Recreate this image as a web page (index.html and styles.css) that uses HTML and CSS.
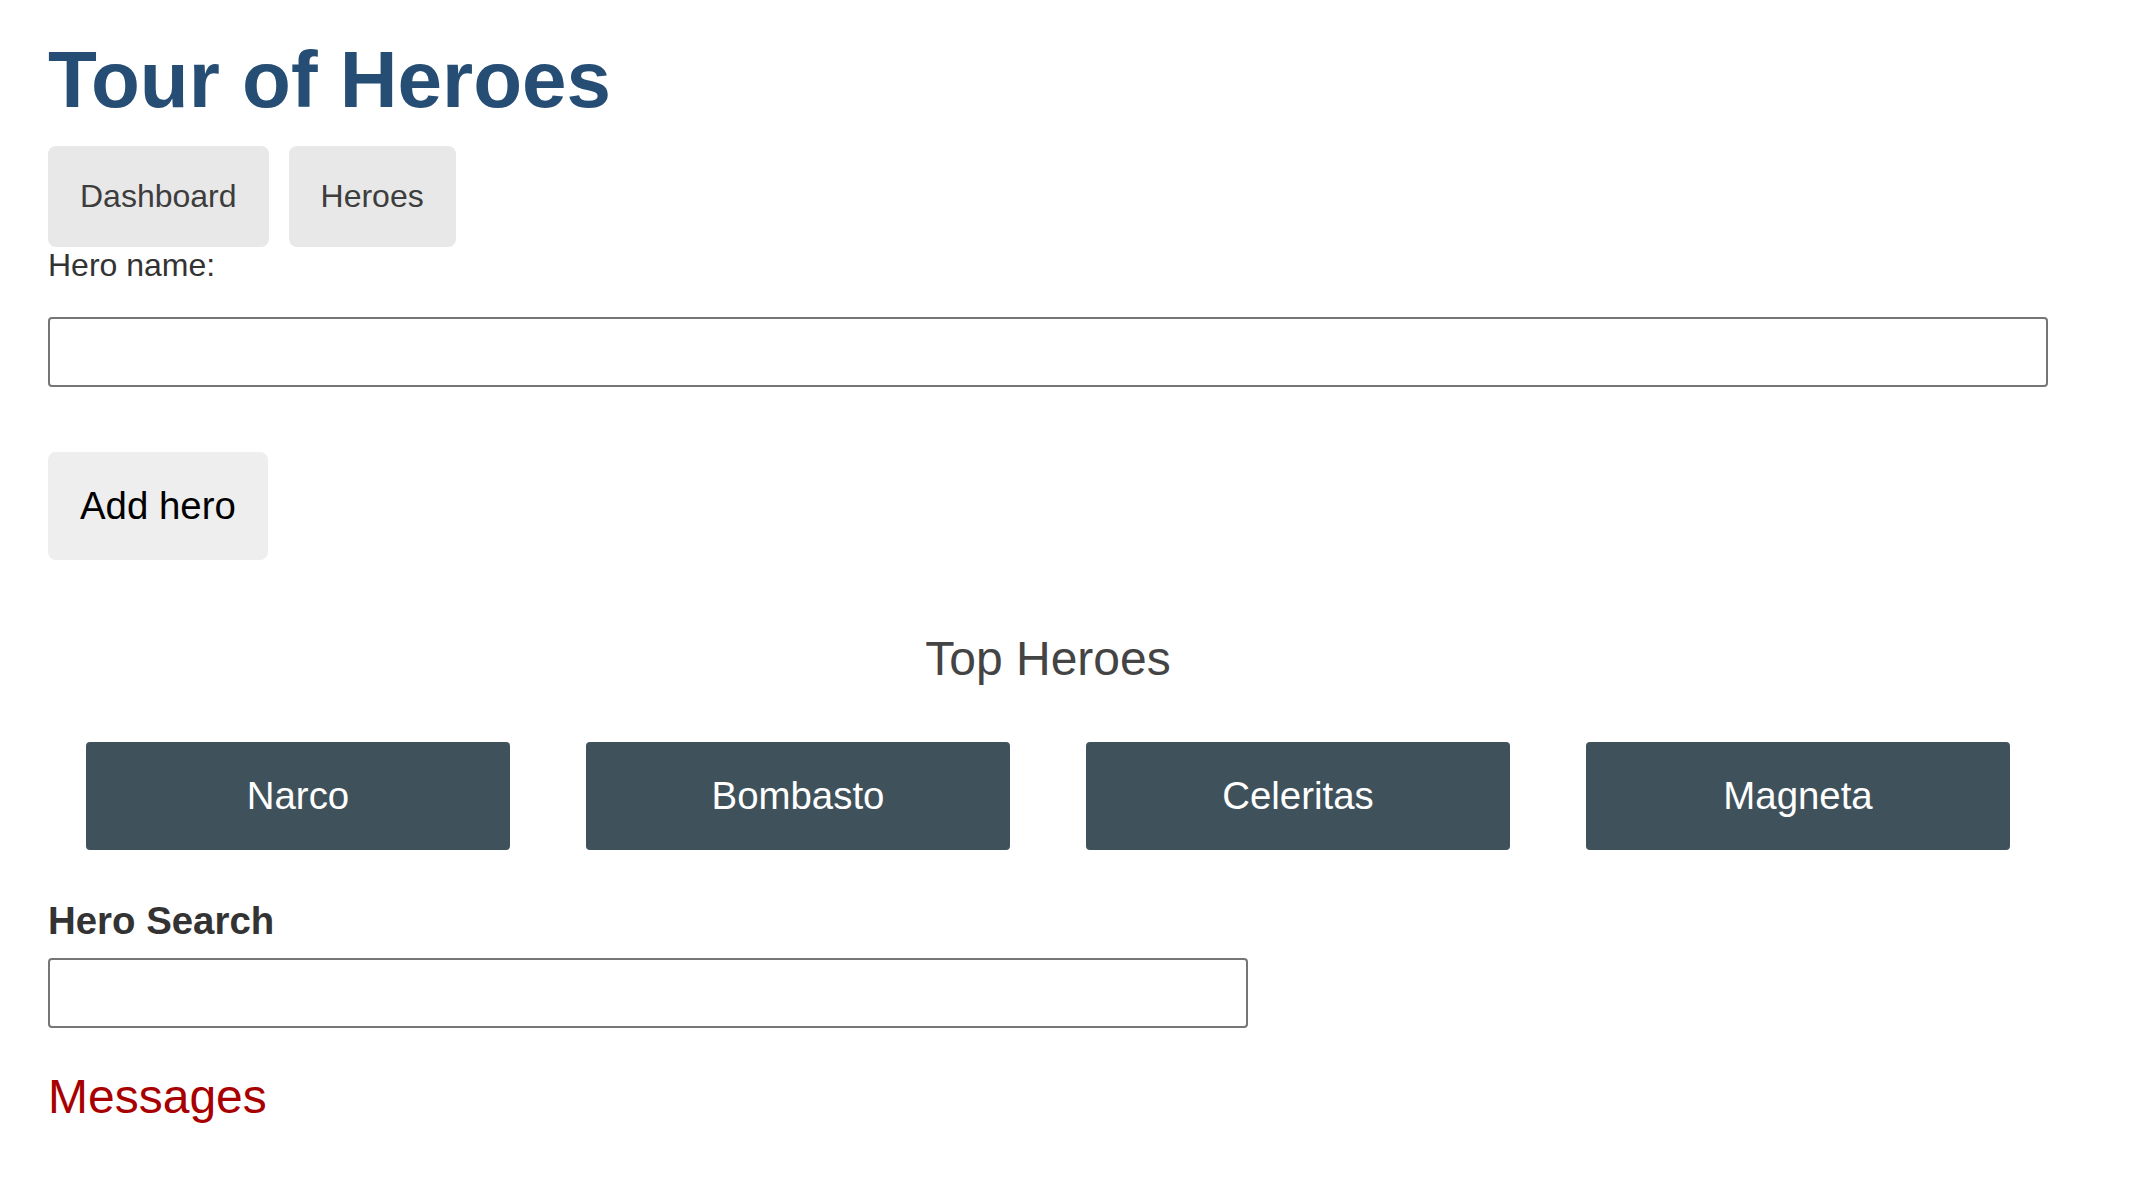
FILE: index.html
```html
<!DOCTYPE html>
<html lang="en">
<head>
<meta charset="utf-8">
<title>Tour of Heroes</title>
<link rel="stylesheet" href="styles.css">
</head>
<body>
<div class="page">
  <h1 class="title">Tour of Heroes</h1>
  <nav class="nav">
    <a class="nav-link" href="#">Dashboard</a>
    <a class="nav-link" href="#">Heroes</a>
  </nav>
  <label class="field-label" for="new-hero">Hero name:</label>
  <input class="text-input name-input" id="new-hero" type="text">
  <div class="add-row">
    <button class="add-btn" type="button">Add hero</button>
  </div>
  <h2 class="top-title">Top Heroes</h2>
  <div class="heroes-menu">
    <a class="hero-card" href="#">Narco</a>
    <a class="hero-card" href="#">Bombasto</a>
    <a class="hero-card" href="#">Celeritas</a>
    <a class="hero-card" href="#">Magneta</a>
  </div>
  <label class="search-label" for="search-box">Hero Search</label>
  <input class="text-input search-input" id="search-box" type="text">
  <h2 class="messages-title">Messages</h2>
</div>
</body>
</html>
```

FILE: styles.css
```css
* {
  font-family: "Liberation Sans", Arial, Helvetica, sans-serif;
  box-sizing: border-box;
}

html, body {
  margin: 0;
  padding: 0;
  background: #fff;
}

.page {
  display: flex;
  flex-direction: column;
  align-items: flex-start;
  padding: 34px 0 0 48px;
}

.title {
  margin: 0;
  font-size: 80px;
  line-height: 92px;
  font-weight: bold;
  color: #264D73;
}

.nav {
  display: flex;
  gap: 20px;
  margin-top: 20px;
}

.nav-link {
  display: block;
  padding: 32px;
  font-size: 32px;
  line-height: 37px;
  color: #3d3d3d;
  background-color: #e8e8e8;
  border-radius: 8px;
  text-decoration: none;
}

.field-label {
  font-size: 32px;
  line-height: 37px;
  color: #333;
}

.text-input {
  display: block;
  border: 2px solid #767676;
  border-radius: 4px;
  background: #fff;
  padding: 0 16px;
  font-size: 32px;
  color: #333;
}

.name-input {
  margin-top: 33px;
  width: 2000px;
  height: 70px;
}

.add-row {
  margin-top: 65px;
}

.add-btn {
  display: block;
  padding: 32px;
  font-size: 38.4px;
  line-height: 44px;
  color: #000;
  background-color: #eee;
  border: none;
  border-radius: 8px;
  cursor: pointer;
}

.top-title {
  margin: 71px 0 0;
  width: 2000px;
  text-align: center;
  font-size: 48px;
  line-height: 55px;
  font-weight: normal;
  color: #444;
}

.heroes-menu {
  display: flex;
  width: 2000px;
  margin-top: 56px;
}

.hero-card {
  display: block;
  width: 424px;
  margin: 0 auto;
  padding: 32px;
  font-size: 38.4px;
  line-height: 44px;
  text-align: center;
  color: #fff;
  background-color: #3f525c;
  border-radius: 4px;
  text-decoration: none;
}

.search-label {
  margin-top: 49px;
  font-size: 38.4px;
  line-height: 44px;
  font-weight: bold;
  color: #333;
}

.search-input {
  margin-top: 15px;
  width: 1200px;
  height: 70px;
}

.messages-title {
  margin: 41px 0 0;
  font-size: 48px;
  line-height: 55px;
  font-weight: normal;
  color: #A80000;
}
```
